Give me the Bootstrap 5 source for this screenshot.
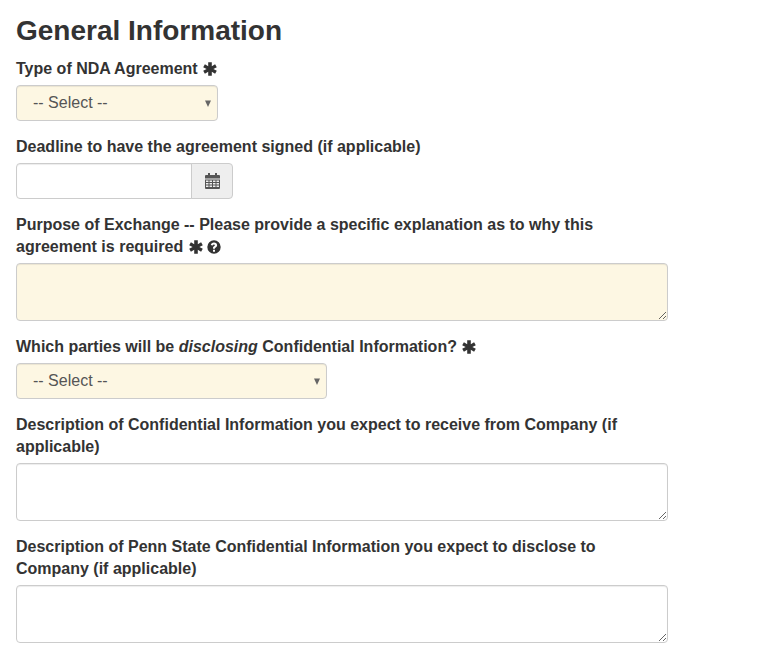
<!DOCTYPE html>
<html lang="en">
<head>
<meta charset="utf-8">
<title>General Information</title>
<link rel="stylesheet" href="https://cdn.jsdelivr.net/npm/bootstrap@5.3.0/dist/css/bootstrap.min.css">
<style>
body { font-family: "Liberation Sans", Arial, sans-serif; font-size: 16px; line-height: 22px; color: #333; background: #fff; }
.page-wrap { width: 652px; margin-left: 16px; padding-top: 14px; }
.page-title { font-family: inherit; font-size: 28px; line-height: 34px; font-weight: 700; color: #333; margin: 0 0 10px; }
.field { margin-bottom: 15px; }
.field-label { display: block; font-weight: 700; font-size: 16px; line-height: 22px; color: #333; margin-bottom: 5px; }
.field-label em { font-style: italic; font-weight: 700; }
.req-icon, .help-icon { display: inline-block; vertical-align: -2px; fill: #333; }
.req-icon { margin-left: 1px; }
.ctl { border: 1px solid #ccc; border-radius: 4px; font-size: 16px; line-height: 22px; color: #555; box-shadow: inset 0 1px 1px rgba(0,0,0,.075); }
.ctl.form-select { height: 36px; padding: 6px 24px 6px 16px; background-color: #fdf7e3; background-position: right 6px center; background-size: 6px 7px; background-image: url("data:image/svg+xml,%3csvg xmlns='http://www.w3.org/2000/svg' viewBox='0 0 6 7'%3e%3cpath fill='%23666' d='M0 .5h6L3 7z'/%3e%3c/svg%3e"); }
.select-a { width: 202px; }
.select-b { width: 311px; }
.date-group { width: 217px; }
.date-group .form-control { height: 36px; }
.date-addon { width: 42px; justify-content: center; padding: 0; background: #eee; border: 1px solid #ccc; border-radius: 0 4px 4px 0; }
.date-addon svg { fill: #555; display: block; }
textarea.ctl.form-control { height: 58px; min-height: 58px; padding: 6px 12px; display: block; width: 100%; }
textarea.req-bg { background: #fdf7e3; }
</style>
</head>
<body>
<div class="page-wrap">
  <h2 class="page-title">General Information</h2>
  <form>
    <div class="field">
      <label class="field-label" for="f1">Type of NDA Agreement
        <svg class="req-icon" width="14" height="14" viewBox="0 0 14 14" aria-hidden="true"><path d="M5.200.3h3.600v3.900l3.300-2 1.700 3L10.400 7l3.400 1.800-1.700 3-3.300-2v3.900H5.200V9.800l-3.300 2-1.700-3L3.600 7 .2 5.200l1.700-3 3.300 2z"/></svg>
      </label>
      <select id="f1" class="form-select ctl select-a"><option>-- Select --</option></select>
    </div>
    <div class="field">
      <label class="field-label" for="f2">Deadline to have the agreement signed (if applicable)</label>
      <div class="input-group date-group">
        <input id="f2" type="text" class="form-control ctl">
        <span class="input-group-text date-addon">
          <svg width="15" height="16" viewBox="0 0 15 16" aria-hidden="true"><path d="M3 0h2v2h5V0h2v2h2a1 1 0 0 1 1 1v2.500H0V3a1 1 0 0 1 1-1h2z"/><path fill-rule="evenodd" d="M0 6.500h15V15a1 1 0 0 1-1 1H1a1 1 0 0 1-1-1zm1 1V9h2.500V7.500zm3.500 0V9h2.500V7.500zm3.500 0V9h2.500V7.500zm3.500 0V9H14V7.500zM1 10v1.500h2.500V10zm3.500 0v1.500h2.500V10zm3.500 0v1.500h2.500V10zm3.500 0v1.500H14V10zM1 12.500V14h2.500v-1.500zm3.500 0V14h2.500v-1.500zm3.500 0V14h2.500v-1.500zm3.500 0V14H14v-1.500z"/></svg>
        </span>
      </div>
    </div>
    <div class="field">
      <label class="field-label" for="f3">Purpose of Exchange -- Please provide a specific explanation as to why this agreement is required
        <svg class="req-icon" width="14" height="14" viewBox="0 0 14 14" aria-hidden="true"><path d="M5.200.3h3.600v3.900l3.300-2 1.700 3L10.400 7l3.400 1.800-1.700 3-3.300-2v3.900H5.200V9.800l-3.300 2-1.700-3L3.600 7 .2 5.200l1.700-3 3.300 2z"/></svg>
        <svg class="help-icon" width="14" height="14" viewBox="0 0 14 14" aria-hidden="true"><path fill-rule="evenodd" d="M7 .3a6.700 6.700 0 1 1 0 13.400A6.700 6.700 0 0 1 7 .3zM6 9.800v2h2v-2zM7 2.500c-1.700 0-2.900.9-3.200 2.400l1.900.5c.2-.7.600-1 1.200-1 .6 0 1 .3 1 .8 0 .4-.3.700-.9 1.100-.8.500-1 1-1 1.700v.7h2v-.4c0-.4.200-.6.700-.9.900-.6 1.400-1.200 1.400-2.200 0-1.600-1.300-2.700-3.100-2.700z"/></svg>
      </label>
      <textarea id="f3" class="form-control ctl req-bg"></textarea>
    </div>
    <div class="field">
      <label class="field-label" for="f4">Which parties will be <em>disclosing</em> Confidential Information?
        <svg class="req-icon" width="14" height="14" viewBox="0 0 14 14" aria-hidden="true"><path d="M5.200.3h3.600v3.900l3.300-2 1.700 3L10.400 7l3.400 1.800-1.700 3-3.300-2v3.900H5.200V9.800l-3.300 2-1.700-3L3.600 7 .2 5.200l1.700-3 3.300 2z"/></svg>
      </label>
      <select id="f4" class="form-select ctl select-b"><option>-- Select --</option></select>
    </div>
    <div class="field">
      <label class="field-label" for="f5">Description of Confidential Information you expect to receive from Company (if applicable)</label>
      <textarea id="f5" class="form-control ctl"></textarea>
    </div>
    <div class="field">
      <label class="field-label" for="f6">Description of Penn State Confidential Information you expect to disclose to Company (if applicable)</label>
      <textarea id="f6" class="form-control ctl"></textarea>
    </div>
  </form>
</div>
<script src="https://cdn.jsdelivr.net/npm/bootstrap@5.3.0/dist/js/bootstrap.bundle.min.js"></script>
</body>
</html>
